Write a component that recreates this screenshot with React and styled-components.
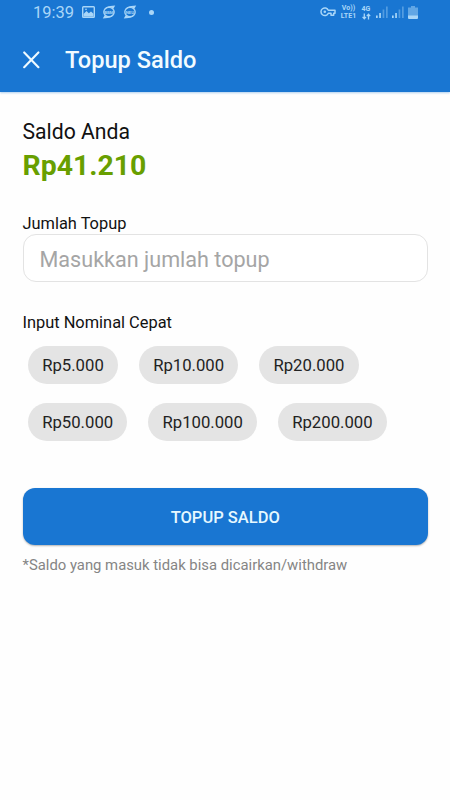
import React from "react";
import styled, { createGlobalStyle } from "styled-components";

const GlobalStyle = createGlobalStyle`
  * {
    box-sizing: border-box;
    margin: 0;
    padding: 0;
  }

  body {
    background-color: white;
    font-family: Roboto, sans-serif;
  }
`;

const Container = styled.div`
  width: 100%;
  min-height: 800px;
  background-color: #fefefe;
`;

const Header = styled.header`
  height: 92px;
  background-color: #1976d2;
  box-shadow: 0px 1px 2px rgba(25, 118, 210, 0.35);
`;

const StatusBar = styled.div`
  height: 26px;
  padding: 0 32px 2px 33px;
  display: flex;
  align-items: center;
  justify-content: space-between;
  color: #a9d6f8;
`;

const StatusGroup = styled.div`
  display: flex;
  align-items: center;
`;

const Clock = styled.span`
  width: 49px;
  padding-top: 1px;
  font-size: 16.5px;
  line-height: 24px;
`;

const StatusIcon = styled.svg`
  display: block;
  flex: none;
  margin-right: ${(props) => props.$gap || 0}px;
`;

const Network = styled.div`
  width: ${(props) => props.$width}px;
  margin-right: ${(props) => props.$gap}px;
  display: flex;
  flex-direction: column;
  align-items: center;
  font-size: 7px;
  font-weight: bold;
  line-height: 8px;
  white-space: nowrap;
`;

const Toolbar = styled.div`
  height: 66px;
  padding: 1px 22px 0;
  display: flex;
  align-items: center;
`;

const CloseButton = styled.button`
  width: 43px;
  display: flex;
  border: none;
  background: none;
  cursor: pointer;
`;

const Title = styled.h1`
  color: #f2fbff;
  font-size: 23.6px;
  font-weight: 500;
  line-height: 28px;
`;

const Content = styled.main`
  padding: 26px 22px 0 22.5px;
`;

const BalanceLabel = styled.p`
  color: #111;
  font-size: 21.2px;
  line-height: 28px;
`;

const Balance = styled.p`
  margin-bottom: 28px;
  color: #689f00;
  font-size: 28.4px;
  font-weight: bold;
  line-height: 40px;
`;

const Label = styled.label`
  display: block;
  color: #111;
  font-size: 16.4px;
  line-height: 20px;
`;

const Input = styled.input`
  display: block;
  width: 100%;
  height: 48px;
  margin-bottom: 31px;
  padding: 2px 16px 0;
  border: 1.5px solid #e3e3e3;
  border-radius: 13px;
  background-color: white;
  font-family: inherit;
  font-size: 21.6px;
  outline: none;

  &::placeholder {
    color: #a5a5a5;
    opacity: 1;
  }
`;

const Chips = styled.div`
  margin: 13px 0 47px;
  padding-left: 5.5px;
  display: flex;
  flex-wrap: wrap;
  gap: 19px 21px;
`;

const Chip = styled.button`
  height: 38px;
  padding: 0 14.2px;
  border: none;
  border-radius: 19px;
  background-color: #e4e4e4;
  color: #222;
  font-family: inherit;
  font-size: 16.7px;
  cursor: pointer;
`;

const SubmitButton = styled.button`
  display: block;
  width: 100%;
  height: 57px;
  padding-top: 1px;
  border: none;
  border-radius: 12px;
  background-color: #1976d2;
  box-shadow: 0px 1px 2px rgba(0, 0, 0, 0.3);
  color: #e6f8ff;
  font-family: inherit;
  font-size: 16.5px;
  font-weight: 500;
  cursor: pointer;
`;

const Note = styled.p`
  margin-top: 10px;
  color: #858585;
  font-size: 14.85px;
  line-height: 20px;
`;

const amounts = [
  "Rp5.000",
  "Rp10.000",
  "Rp20.000",
  "Rp50.000",
  "Rp100.000",
  "Rp200.000",
];

const PictureIcon = () => (
  <StatusIcon $gap={7} width="13" height="12" viewBox="0 0 13 12">
    <rect x="0.7" y="0.7" width="11.6" height="10.6" rx="0.8" fill="none" stroke="currentColor" strokeWidth="1.4" />
    <path d="M1.5 10.5V8l3-3 2.3 2.3L9 5.6l2.5 2.2v2.7z" fill="currentColor" />
    <circle cx="4" cy="3.4" r="0.8" fill="currentColor" />
  </StatusIcon>
);

// round chat bubble with a tail on two corners and a short label inside
const ChatIcon = ({ text, gap }) => (
  <StatusIcon $gap={gap} width="14" height="14" viewBox="0 0 14 14">
    <ellipse cx="7" cy="7" rx="5.2" ry="4.7" fill="none" stroke="currentColor" strokeWidth="1.3" />
    <path
      d="M2.2 4.8C3.2 2 5.500 0.900 13.200 0.500L11.400 3.800C9 2 5 2 2.200 4.800zM11.800 9.200C10.800 12 8.500 13.100 0.800 13.500L2.600 10.200C5 12 9 12 11.800 9.200z"
      fill="currentColor"
    />
    <text x="7" y="8.6" fontSize="4.4" fontWeight="bold" textAnchor="middle" fill="currentColor">
      {text}
    </text>
  </StatusIcon>
);

const DotIcon = () => (
  <StatusIcon width="5" height="5" viewBox="0 0 5 5">
    <circle cx="2.5" cy="2.5" r="2.5" fill="currentColor" />
  </StatusIcon>
);

const KeyIcon = () => (
  <StatusIcon $gap={4} width="16" height="10" viewBox="0 0 16 10">
    <path
      d="M8.3 3.3H15v2.9h-1.3v2h-2.7v-2H8.3A3.8 3.8 0 1 1 8.3 3.3z"
      fill="none"
      stroke="currentColor"
      strokeWidth="1.5"
      strokeLinejoin="round"
    />
    <circle cx="4.8" cy="4.8" r="1.3" fill="currentColor" />
  </StatusIcon>
);

const ArrowsIcon = () => (
  <StatusIcon width="9" height="7" viewBox="0 0 9 7">
    <path
      d="M2.3 0.5v4.500M0.600 3.800l1.700 2 1.700-2M6.500 6.500V2M4.800 3.200l1.700-2 1.700 2"
      fill="none"
      stroke="currentColor"
      strokeWidth="1.3"
    />
  </StatusIcon>
);

const SignalIcon = ({ gap }) => (
  <StatusIcon $gap={gap} width="12" height="12" viewBox="0 0 12 12" fill="currentColor">
    <rect x="0" y="9.5" width="1.7" height="2.5" />
    <rect x="3.2" y="7" width="1.7" height="5" />
    <rect x="6.6" y="3.5" width="1.7" height="8.5" opacity="0.4" />
    <rect x="10" y="0.5" width="1.7" height="11.5" opacity="0.4" />
  </StatusIcon>
);

const BatteryIcon = () => (
  <StatusIcon width="10" height="13" viewBox="0 0 10 13" fill="currentColor">
    <path d="M3 0h4v1.5h3V10H0V1.5h3z" opacity="0.5" />
    <path d="M0 9.5h10V12q0 1-1 1H1q-1 0-1-1z" />
  </StatusIcon>
);

const App = () => {
  return (
    <Container>
      <GlobalStyle />
      <Header>
        <StatusBar>
          <StatusGroup>
            <Clock>19:39</Clock>
            <PictureIcon />
            <ChatIcon text="BBM" gap={7} />
            <ChatIcon text="NEU" gap={12} />
            <DotIcon />
          </StatusGroup>
          <StatusGroup>
            <KeyIcon />
            <Network $width={17} $gap={4}>
              <span>Vo))</span>
              <span>LTE1</span>
            </Network>
            <Network $width={10} $gap={5}>
              <span>4G</span>
              <ArrowsIcon />
            </Network>
            <SignalIcon gap={4} />
            <SignalIcon gap={4} />
            <BatteryIcon />
          </StatusGroup>
        </StatusBar>
        <Toolbar>
          <CloseButton aria-label="Tutup">
            <svg width="19" height="18" viewBox="0 0 19 18">
              <path
                d="M2.2 1.4l14.200 14.800M16.400 1.400L2.200 16.200"
                stroke="#eefaff"
                strokeWidth="2.1"
                strokeLinecap="round"
              />
            </svg>
          </CloseButton>
          <Title>Topup Saldo</Title>
        </Toolbar>
      </Header>
      <Content>
        <BalanceLabel>Saldo Anda</BalanceLabel>
        <Balance>Rp41.210</Balance>
        <Label htmlFor="amount">Jumlah Topup</Label>
        <Input id="amount" placeholder="Masukkan jumlah topup" />
        <Label as="p">Input Nominal Cepat</Label>
        <Chips>
          {amounts.map((amount) => (
            <Chip key={amount}>{amount}</Chip>
          ))}
        </Chips>
        <SubmitButton>TOPUP SALDO</SubmitButton>
        <Note>*Saldo yang masuk tidak bisa dicairkan/withdraw</Note>
      </Content>
    </Container>
  );
};

export default App;
